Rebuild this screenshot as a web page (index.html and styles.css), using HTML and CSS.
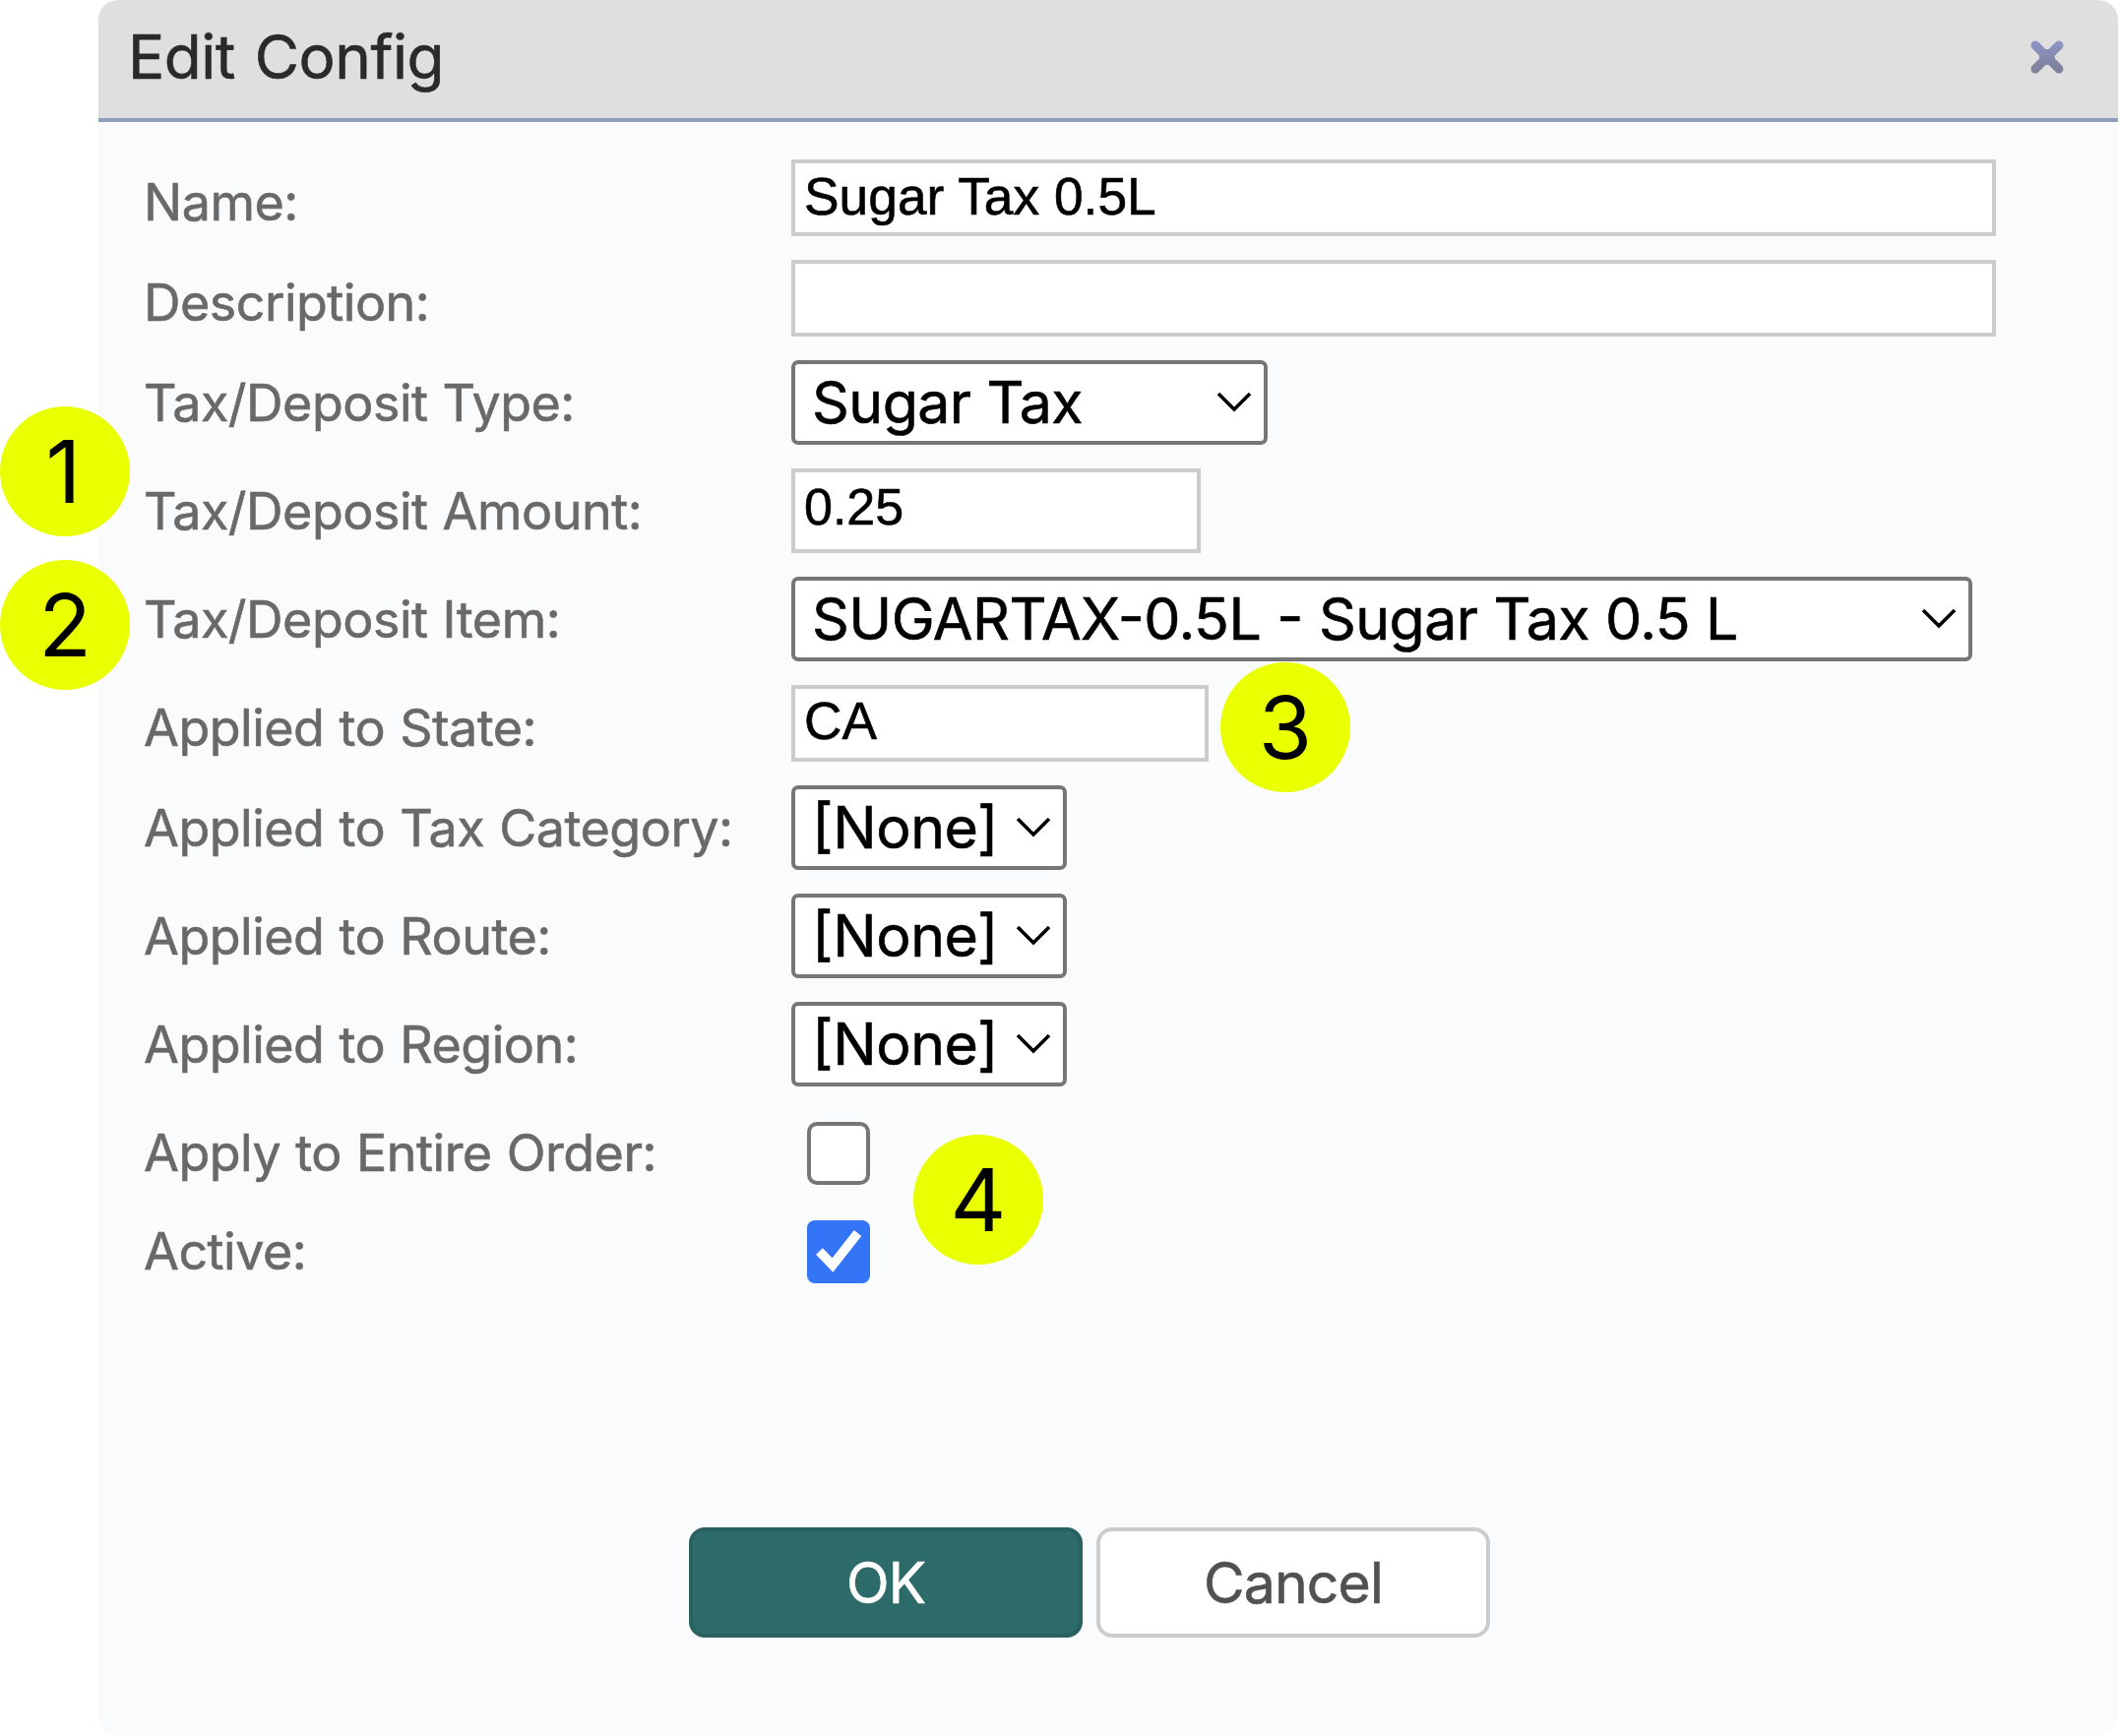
FILE: index.html
```html
<!DOCTYPE html>
<html lang="en">
<head>
<meta charset="utf-8">
<title>Edit Config</title>
<link rel="stylesheet" href="styles.css">
</head>
<body>
<main class="dialog">
  <header class="dialog-header">
    <h1 class="title"><span>Edit Config</span></h1>
    <svg class="close" viewBox="0 0 34 34" role="img" aria-label="Close">
      <defs>
        <linearGradient id="closeFill" gradientUnits="userSpaceOnUse" x1="0" y1="0" x2="0" y2="34">
          <stop offset="0" stop-color="#8f95c8"/>
          <stop offset="1" stop-color="#7b7f95"/>
        </linearGradient>
      </defs>
      <path d="M5 5L29 29M29 5L5 29" stroke="url(#closeFill)" stroke-width="9" stroke-linecap="round"/>
      <circle cx="17" cy="17" r="8" fill="url(#closeFill)"/>
    </svg>
  </header>
  <section class="form">
    <div class="row"><span class="label">Name:</span><span class="input wide"><span>Sugar Tax 0.5L</span></span></div>
    <div class="row"><span class="label">Description:</span><span class="input wide"></span></div>
    <div class="row tall"><span class="label">Tax/Deposit Type:</span><span class="select type"><span>Sugar Tax</span><svg class="chevron" viewBox="0 0 36 22"><path d="M2 2L18 18L34 2"/></svg></span></div>
    <div class="row tall"><span class="label">Tax/Deposit Amount:</span><span class="input amount"><span>0.25</span></span></div>
    <div class="row tall"><span class="label">Tax/Deposit Item:</span><span class="select item"><span>SUGARTAX-0.5L - Sugar Tax 0.5 L</span><svg class="chevron" viewBox="0 0 36 22"><path d="M2 2L18 18L34 2"/></svg></span></div>
    <div class="row"><span class="label">Applied to State:</span><span class="input state"><span>CA</span></span></div>
    <div class="row tall"><span class="label">Applied to Tax Category:</span><span class="select none"><span><span class="bracket">[</span>None]</span><svg class="chevron" viewBox="0 0 36 22"><path d="M2 2L18 18L34 2"/></svg></span></div>
    <div class="row tall"><span class="label">Applied to Route:</span><span class="select none"><span><span class="bracket">[</span>None]</span><svg class="chevron" viewBox="0 0 36 22"><path d="M2 2L18 18L34 2"/></svg></span></div>
    <div class="row tall"><span class="label">Applied to Region:</span><span class="select none"><span><span class="bracket">[</span>None]</span><svg class="chevron" viewBox="0 0 36 22"><path d="M2 2L18 18L34 2"/></svg></span></div>
    <div class="row check"><span class="label">Apply to Entire Order:</span><span class="checkbox"></span></div>
    <div class="row check"><span class="label">Active:</span><span class="checkbox checked"><svg class="tick" viewBox="0 0 64 64"><path d="M12.5 31.5L26 45.5L51.5 13"/></svg></span></div>
  </section>
  <footer class="actions">
    <button class="button primary"><span>OK</span></button>
    <button class="button"><span>Cancel</span></button>
  </footer>
</main>
<span class="badge one">1</span>
<span class="badge two">2</span>
<span class="badge three">3</span>
<span class="badge four">4</span>
</body>
</html>
```
FILE: styles.css
```css
* {
  box-sizing: border-box;
}

body {
  position: relative;
  margin: 0;
  width: 2152px;
  height: 1764px;
  padding-left: 100px;
  background: #fff;
  font-family: Inter, sans-serif;
  overflow: hidden;
}

.dialog {
  display: flex;
  flex-direction: column;
  height: 1764px;
  background: #fafbfd;
  border-radius: 20px;
  overflow: hidden;
  -webkit-text-stroke-width: 0.6px;
}

.dialog-header {
  display: flex;
  justify-content: space-between;
  height: 124px;
  padding: 0 55px 0 30px;
  background: #dfdfdf;
  border-bottom: 4px solid #8f9fbb;
}

.title {
  margin: 0;
  font-size: 62px;
  font-weight: 400;
  line-height: 115px;
  letter-spacing: -0.45px;
  word-spacing: 3px;
  color: #2a2a2a;
}

.close {
  width: 34px;
  height: 34px;
  margin-top: 41px;
}

.form {
  display: flex;
  flex-direction: column;
  gap: 24px;
  padding: 38px 0 0 46px;
}

.row {
  display: grid;
  grid-template-columns: 658px max-content;
  grid-template-rows: 100%;
  height: 78px;
}

.tall {
  height: 86px;
}

.check {
  height: 76px;
}

.label {
  font-size: 52px;
  line-height: 87px;
  letter-spacing: -0.5px;
  word-spacing: 1px;
  color: #696969;
  white-space: nowrap;
}

.input {
  height: 100%;
  padding-left: 9px;
  background: #fff;
  border: 4px solid #ccc;
  font-family: "Liberation Sans", Arial, sans-serif;
  font-size: 53.33px;
  line-height: 67px;
  color: #000;
}

.wide {
  width: 1224px;
}

.amount {
  width: 416px;
  font-size: 52px;
  line-height: 71px;
}

.state {
  width: 424px;
  line-height: 66px;
}

.select {
  display: flex;
  align-items: center;
  justify-content: space-between;
  height: 86px;
  padding: 0 12px 0 17px;
  background: #fff;
  border: 4px solid #767676;
  border-radius: 7px;
  font-size: 59px;
  line-height: 78px;
  letter-spacing: -0.55px;
  color: #000;
  white-space: nowrap;
}

.type {
  width: 484px;
}

.item {
  width: 1200px;
  font-feature-settings: "case" 1;
}

.none {
  width: 280px;
  letter-spacing: -0.4px;
  font-feature-settings: "calt" 0;
}

.bracket {
  font-feature-settings: "case" 1;
}

.chevron {
  width: 36px;
  height: 22px;
}

.chevron path {
  fill: none;
  stroke: #000;
  stroke-width: 3.6;
}

.checkbox {
  width: 64px;
  height: 64px;
  margin: 12px 0 0 16px;
  background: #fff;
  border: 4px solid #767676;
  border-radius: 10px;
}

.checked {
  background: #3375f6;
  border: 0;
  border-radius: 8px;
}

.tick {
  display: block;
  width: 64px;
  height: 64px;
}

.tick path {
  fill: none;
  stroke: #fff;
  stroke-width: 9.5;
}

.actions {
  display: flex;
  gap: 14px;
  margin-top: auto;
  padding: 0 0 100px 600px;
}

.button {
  width: 400px;
  height: 112px;
  padding: 0;
  background: #fff;
  border: 4px solid #ccc;
  border-radius: 16px;
  font-family: Inter, sans-serif;
  font-size: 57px;
  letter-spacing: -0.85px;
  color: #515151;
}

.primary {
  background: #2d6a6a;
  border-color: #296161;
  color: #fff;
}

.badge {
  position: absolute;
  width: 132px;
  height: 132px;
  border-radius: 50%;
  background: #eaff00;
  color: #000;
  font-size: 88px;
  line-height: 133px;
  text-align: center;
}

.one {
  left: 0;
  top: 413px;
  text-indent: -3px;
}

.two {
  left: 0;
  top: 569px;
}

.three {
  left: 1240px;
  top: 673px;
}

.four {
  left: 928px;
  top: 1153px;
}
```
